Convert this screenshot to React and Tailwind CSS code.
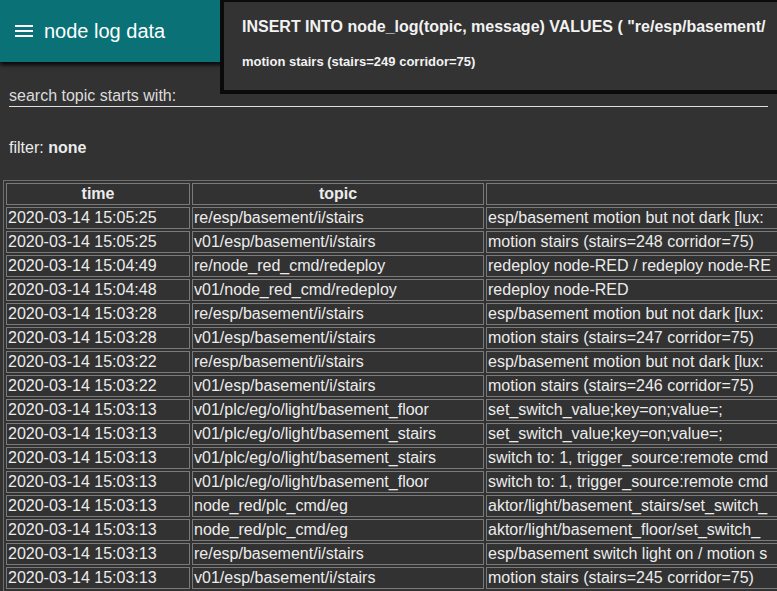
import React from "react";

const rows = [
  ["2020-03-14 15:05:25", "re/esp/basement/i/stairs", "esp/basement motion but not dark [lux:"],
  ["2020-03-14 15:05:25", "v01/esp/basement/i/stairs", "motion stairs (stairs=248 corridor=75)"],
  ["2020-03-14 15:04:49", "re/node_red_cmd/redeploy", "redeploy node-RED / redeploy node-RE"],
  ["2020-03-14 15:04:48", "v01/node_red_cmd/redeploy", "redeploy node-RED"],
  ["2020-03-14 15:03:28", "re/esp/basement/i/stairs", "esp/basement motion but not dark [lux:"],
  ["2020-03-14 15:03:28", "v01/esp/basement/i/stairs", "motion stairs (stairs=247 corridor=75)"],
  ["2020-03-14 15:03:22", "re/esp/basement/i/stairs", "esp/basement motion but not dark [lux:"],
  ["2020-03-14 15:03:22", "v01/esp/basement/i/stairs", "motion stairs (stairs=246 corridor=75)"],
  ["2020-03-14 15:03:13", "v01/plc/eg/o/light/basement_floor", "set_switch_value;key=on;value=;"],
  ["2020-03-14 15:03:13", "v01/plc/eg/o/light/basement_stairs", "set_switch_value;key=on;value=;"],
  ["2020-03-14 15:03:13", "v01/plc/eg/o/light/basement_stairs", "switch to: 1, trigger_source:remote cmd"],
  ["2020-03-14 15:03:13", "v01/plc/eg/o/light/basement_floor", "switch to: 1, trigger_source:remote cmd"],
  ["2020-03-14 15:03:13", "node_red/plc_cmd/eg", "aktor/light/basement_stairs/set_switch_"],
  ["2020-03-14 15:03:13", "node_red/plc_cmd/eg", "aktor/light/basement_floor/set_switch_"],
  ["2020-03-14 15:03:13", "re/esp/basement/i/stairs", "esp/basement switch light on / motion s"],
  ["2020-03-14 15:03:13", "v01/esp/basement/i/stairs", "motion stairs (stairs=245 corridor=75)"],
];

export default function App() {
  return (
    <div
      className="relative h-screen w-screen overflow-hidden bg-[#323232] text-[#ececec]"
      style={{ fontFamily: '"Liberation Sans", Arial, sans-serif' }}
    >
      <header className="relative z-10 flex h-[62px] items-center bg-[#0a7177] shadow-[0_3px_4px_rgba(0,0,0,0.85)]">
        <div className="ml-[15px] flex w-[18px] flex-col gap-[3px]">
          <span className="h-[2px] bg-white" />
          <span className="h-[2px] bg-white" />
          <span className="h-[2px] bg-white" />
        </div>
        <span className="ml-[11px] text-[20px] text-white">node log data</span>
      </header>

      <div className="absolute left-[220px] top-0 z-20 h-[94px] w-[600px] border-4 border-t-2 border-[#0a0a0a] bg-[#333] pl-[18px] font-bold text-[#f2f2f2]">
        <div className="mt-[15px] whitespace-nowrap text-[16px] leading-5">
          INSERT INTO node_log(topic, message) VALUES ( "re/esp/basement/
        </div>
        <div className="mt-[17px] whitespace-nowrap text-[13px] leading-4">
          motion stairs (stairs=249 corridor=75)
        </div>
      </div>

      <div className="px-[9px]">
        <div className="mt-[24px] border-b border-[#e0e0e0] text-[16px] leading-5 text-[#dcdcdc]">
          search topic starts with:
        </div>
        <div className="mt-[31px] text-[16px] leading-5">
          filter: <b>none</b>
        </div>
      </div>

      <table className="ml-[3px] mt-[22px] w-[1009px] table-fixed border-separate border-spacing-[2px] border border-[#6e6e6e] text-[16px] leading-5">
        <thead>
          <tr>
            <th className="w-[184px] border border-[#7a7a7a] px-px py-0 font-bold">time</th>
            <th className="w-[292px] border border-[#7a7a7a] px-px py-0 font-bold">topic</th>
            <th className="border border-[#7a7a7a] px-px py-0"></th>
          </tr>
        </thead>
        <tbody>
          {rows.map((r, i) => (
            <tr key={i}>
              {r.map((c, j) => (
                <td
                  key={j}
                  className="overflow-hidden whitespace-nowrap border border-[#7a7a7a] px-px py-0 text-left"
                >
                  {c}
                </td>
              ))}
            </tr>
          ))}
        </tbody>
      </table>
    </div>
  );
}
